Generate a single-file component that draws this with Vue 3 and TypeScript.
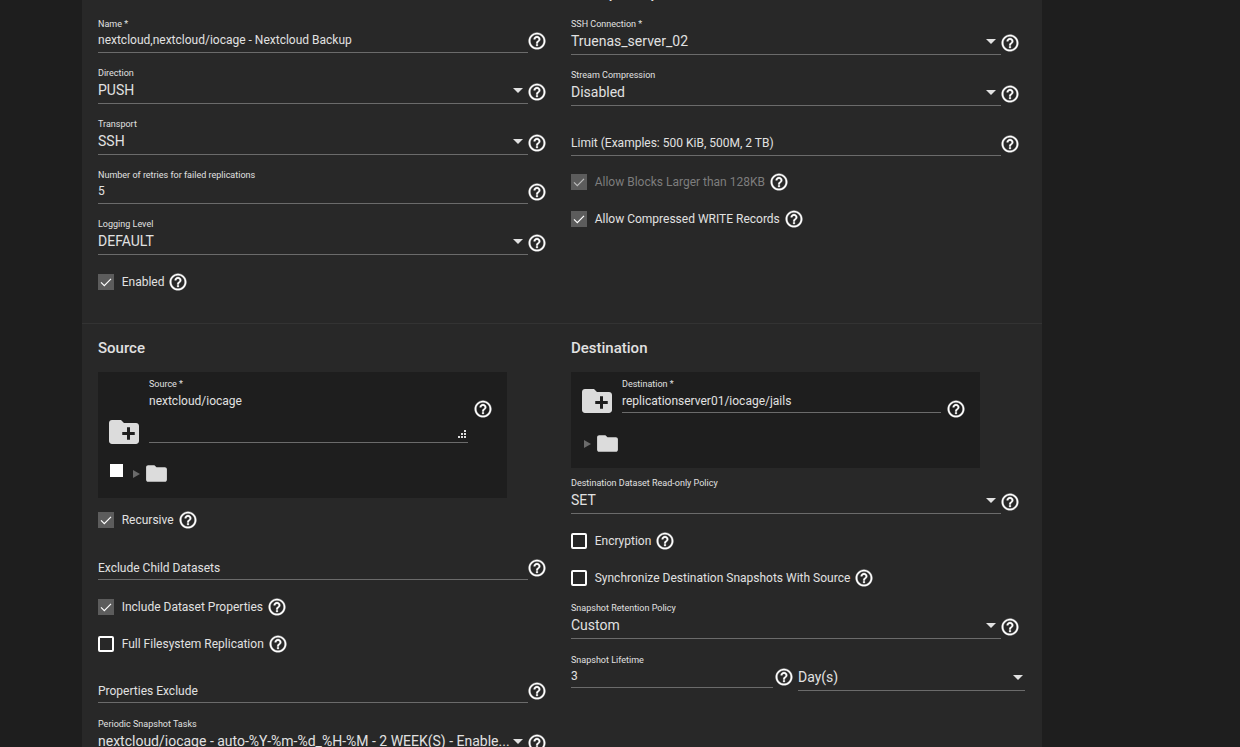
<script setup lang="ts">
interface Field {
  label: string
  value: string
  kind: 'input' | 'select' | 'empty'
}

const helpPath =
  'M11 18h2v-2h-2v2zm1-16C6.48 2 2 6.48 2 12s4.48 10 10 10 10-4.48 10-10S17.52 2 12 2zm0 18c-4.41 0-8-3.59-8-8s3.59-8 8-8 8 3.59 8 8-3.59 8-8 8zm0-14c-2.21 0-4 1.79-4 4h2c0-1.1.9-2 2-2s2 .9 2 2c0 2-3 1.75-3 5h2c0-2.25 3-2.5 3-5 0-2.21-1.79-4-4-4z'
const newFolderPath =
  'M20 6h-8l-2-2H4c-1.11 0-1.99.89-1.99 2L2 18c0 1.11.89 2 2 2h16c1.11 0 2-.89 2-2V8c0-1.11-.89-2-2-2zm-1 8h-3v3h-2v-3h-3v-2h3V9h2v3h3v2z'
const folderPath = 'M10 4H4c-1.1 0-1.99.9-1.99 2L2 18c0 1.1.9 2 2 2h16c1.1 0 2-.9 2-2V8c0-1.1-.9-2-2-2h-8l-2-2z'

const generalFields: Field[] = [
  { label: 'Name *', value: 'nextcloud,nextcloud/iocage - Nextcloud Backup', kind: 'input' },
  { label: 'Direction', value: 'PUSH', kind: 'select' },
  { label: 'Transport', value: 'SSH', kind: 'select' },
  { label: 'Number of retries for failed replications', value: '5', kind: 'input' },
  { label: 'Logging Level', value: 'DEFAULT', kind: 'select' },
]
const transportFields: Field[] = [
  { label: 'SSH Connection *', value: 'Truenas_server_02', kind: 'select' },
  { label: 'Stream Compression', value: 'Disabled', kind: 'select' },
  { label: '', value: 'Limit (Examples: 500 KiB, 500M, 2 TB)', kind: 'empty' },
]
</script>

<template>
  <div class="page">
    <main class="card">
      <section class="section top">
        <div class="col">
          <h3 class="heading">General</h3>
          <div class="stack">
            <div v-for="f in generalFields" :key="f.label" class="field" :class="f.kind">
              <div class="control">
                <label class="label">{{ f.label }}</label>
                <div class="value-row">
                  <span class="value">{{ f.value }}</span>
                  <i v-if="f.kind === 'select'" class="caret"></i>
                </div>
              </div>
              <svg class="help" viewBox="0 0 24 24"><path :d="helpPath" /></svg>
            </div>
          </div>
          <div class="check enabled-row">
            <span class="box on"><svg viewBox="0 0 16 16"><path d="M3 8.4l3.3 3.2L13 4.8" /></svg></span>
            <span class="check-text">Enabled</span>
            <svg class="help" viewBox="0 0 24 24"><path :d="helpPath" /></svg>
          </div>
        </div>
        <div class="col">
          <h3 class="heading">Transport Options</h3>
          <div class="stack right-stack">
            <div v-for="f in transportFields" :key="f.value" class="field" :class="f.kind">
              <div class="control">
                <label v-if="f.label" class="label">{{ f.label }}</label>
                <div class="value-row">
                  <span class="value">{{ f.value }}</span>
                  <i v-if="f.kind === 'select'" class="caret"></i>
                </div>
              </div>
              <svg class="help" viewBox="0 0 24 24"><path :d="helpPath" /></svg>
            </div>
          </div>
          <div class="check large-block disabled">
            <span class="box on"><svg viewBox="0 0 16 16"><path d="M3 8.4l3.3 3.2L13 4.8" /></svg></span>
            <span class="check-text">Allow Blocks Larger than 128KB</span>
            <svg class="help" viewBox="0 0 24 24"><path :d="helpPath" /></svg>
          </div>
          <div class="check compressed">
            <span class="box on"><svg viewBox="0 0 16 16"><path d="M3 8.4l3.3 3.2L13 4.8" /></svg></span>
            <span class="check-text">Allow Compressed WRITE Records</span>
            <svg class="help" viewBox="0 0 24 24"><path :d="helpPath" /></svg>
          </div>
        </div>
      </section>

      <section class="section bottom">
        <div class="col">
          <h3 class="heading">Source</h3>
          <div class="explorer source-box">
            <div class="explorer-head">
              <svg class="new-folder" viewBox="0 0 24 24"><path :d="newFolderPath" /><path class="plus" d="M19 14h-3v3h-2v-3h-3v-2h3V9h2v3h3z" /></svg>
              <div class="explorer-control tall">
                <label class="label">Source *</label>
                <div class="value">nextcloud/iocage</div>
                <svg class="grip" viewBox="0 0 9 8"><path d="M7 0h2v2H7zM7 3h2v2H7zM7 6h2v2H7zM4 3h2v2H4zM4 6h2v2H4zM1 6h2v2H1z" /></svg>
              </div>
              <svg class="help" viewBox="0 0 24 24"><path :d="helpPath" /></svg>
            </div>
            <div class="tree-row with-check">
              <i class="tree-check"></i>
              <i class="tree-arrow"></i>
              <svg class="tree-folder" viewBox="0 0 24 24"><path :d="folderPath" /></svg>
            </div>
          </div>
          <div class="check recursive">
            <span class="box on"><svg viewBox="0 0 16 16"><path d="M3 8.4l3.3 3.2L13 4.8" /></svg></span>
            <span class="check-text">Recursive</span>
            <svg class="help" viewBox="0 0 24 24"><path :d="helpPath" /></svg>
          </div>
          <div class="field empty exclude">
            <div class="control"><div class="value-row"><span class="value">Exclude Child Datasets</span></div></div>
            <svg class="help" viewBox="0 0 24 24"><path :d="helpPath" /></svg>
          </div>
          <div class="check include">
            <span class="box on"><svg viewBox="0 0 16 16"><path d="M3 8.4l3.3 3.2L13 4.8" /></svg></span>
            <span class="check-text">Include Dataset Properties</span>
            <svg class="help" viewBox="0 0 24 24"><path :d="helpPath" /></svg>
          </div>
          <div class="check full">
            <span class="box"></span>
            <span class="check-text">Full Filesystem Replication</span>
            <svg class="help" viewBox="0 0 24 24"><path :d="helpPath" /></svg>
          </div>
          <div class="field empty props">
            <div class="control"><div class="value-row"><span class="value">Properties Exclude</span></div></div>
            <svg class="help" viewBox="0 0 24 24"><path :d="helpPath" /></svg>
          </div>
          <div class="field select periodic">
            <div class="control">
              <label class="label">Periodic Snapshot Tasks</label>
              <div class="value-row">
                <span class="value">nextcloud/iocage - auto-%Y-%m-%d_%H-%M - 2 WEEK(S) - Enable...</span>
                <i class="caret"></i>
              </div>
            </div>
            <svg class="help" viewBox="0 0 24 24"><path :d="helpPath" /></svg>
          </div>
        </div>

        <div class="col">
          <h3 class="heading">Destination</h3>
          <div class="explorer dest-box">
            <div class="explorer-head">
              <svg class="new-folder" viewBox="0 0 24 24"><path :d="newFolderPath" /><path class="plus" d="M19 14h-3v3h-2v-3h-3v-2h3V9h2v3h3z" /></svg>
              <div class="explorer-control">
                <label class="label">Destination *</label>
                <div class="value">replicationserver01/iocage/jails</div>
              </div>
              <svg class="help" viewBox="0 0 24 24"><path :d="helpPath" /></svg>
            </div>
            <div class="tree-row">
              <i class="tree-arrow"></i>
              <svg class="tree-folder" viewBox="0 0 24 24"><path :d="folderPath" /></svg>
            </div>
          </div>
          <div class="field select policy">
            <div class="control">
              <label class="label">Destination Dataset Read-only Policy</label>
              <div class="value-row"><span class="value">SET</span><i class="caret"></i></div>
            </div>
            <svg class="help" viewBox="0 0 24 24"><path :d="helpPath" /></svg>
          </div>
          <div class="check encryption">
            <span class="box"></span>
            <span class="check-text">Encryption</span>
            <svg class="help" viewBox="0 0 24 24"><path :d="helpPath" /></svg>
          </div>
          <div class="check sync">
            <span class="box"></span>
            <span class="check-text">Synchronize Destination Snapshots With Source</span>
            <svg class="help" viewBox="0 0 24 24"><path :d="helpPath" /></svg>
          </div>
          <div class="field select retention">
            <div class="control">
              <label class="label">Snapshot Retention Policy</label>
              <div class="value-row"><span class="value">Custom</span><i class="caret"></i></div>
            </div>
            <svg class="help" viewBox="0 0 24 24"><path :d="helpPath" /></svg>
          </div>
          <div class="lifetime">
            <div class="field input life-value">
              <div class="control">
                <label class="label">Snapshot Lifetime</label>
                <div class="value-row"><span class="value">3</span></div>
              </div>
              <svg class="help" viewBox="0 0 24 24"><path :d="helpPath" /></svg>
            </div>
            <div class="life-unit">
              <div class="value-row"><span class="value">Day(s)</span><i class="caret"></i></div>
            </div>
          </div>
        </div>
      </section>
    </main>
  </div>
</template>

<style>
html,
body {
  margin: 0;
  background: #1e1e1e;
}
</style>

<style scoped>
.page {
  height: 747px;
  overflow: hidden;
  background: #1e1e1e;
  font-family: Roboto, "Liberation Sans", sans-serif;
  color: #e1e1e1;
}
.card {
  width: 960px;
  margin: -32px 0 0 82px;
  background: #282828;
}
.section {
  display: grid;
  grid-template-columns: 473px 1fr;
  padding-left: 16px;
}
.top {
  height: 356px;
  box-sizing: border-box;
  border-bottom: 1px solid #333;
}
.bottom {
  height: 430px;
}
.heading {
  margin: 0;
  height: 50px;
  font-size: 15px;
  line-height: 50px;
  font-weight: 500;
  color: #e1e1e1;
}
.bottom .heading {
  height: 49px;
  line-height: 49px;
}
.stack {
  display: flex;
  flex-direction: column;
  gap: 14px;
}
.field {
  display: flex;
  align-items: flex-end;
}
.control {
  position: relative;
  flex: 0 0 430px;
  box-sizing: border-box;
  border-bottom: 1px solid #6b6b6b;
}
.label {
  display: block;
  height: 12px;
  font-size: 9px;
  line-height: 12px;
  color: #e1e1e1;
}
.value-row {
  display: flex;
  align-items: center;
  justify-content: space-between;
  height: 18px;
  font-size: 14px;
  line-height: 18px;
}
.value {
  white-space: nowrap;
}
.input .control {
  height: 35px;
}
.input .value-row {
  margin-top: 1px;
}
.input .value {
  font-size: 12px;
}
.select .control {
  height: 37px;
}
.select .value-row {
  margin-top: 2px;
}
.empty .control {
  height: 22px;
}
.empty .value-row {
  margin-top: 1px;
}
.right-stack .empty .value-row {
  margin-top: 0;
}
.empty .value {
  font-size: 12px;
}
.caret {
  flex: none;
  width: 0;
  height: 0;
  margin-right: 5px;
  border-left: 5px solid transparent;
  border-right: 5px solid transparent;
  border-top: 5px solid #e1e1e1;
}
.help {
  flex: none;
  width: 20px;
  height: 20px;
  fill: #fff;
  stroke: #fff;
  stroke-width: 0.4;
}
.field > .help {
  margin: 0 0 2px -1px;
}
.check {
  display: flex;
  align-items: center;
  height: 20px;
  font-size: 12px;
}
.box {
  flex: none;
  box-sizing: border-box;
  width: 16px;
  height: 16px;
  border: 2px solid #fff;
  border-radius: 2px;
  margin-right: 7.7px;
}
.box.on {
  border: 0;
  border-radius: 0;
  background: #5c5c5c;
}
.box svg {
  display: block;
  width: 16px;
  height: 16px;
  fill: none;
  stroke: #fff;
  stroke-width: 1.2;
}
.check-text {
  color: #e1e1e1;
}
.check .help {
  margin-left: 4px;
}
.disabled .check-text {
  color: #7d7d7d;
}
.disabled .box svg {
  stroke: #bbb;
}
.enabled-row {
  margin-top: 17px;
}
.right-stack .empty {
  margin-top: 14px;
}
.large-block {
  margin-top: 16px;
}
.compressed {
  margin-top: 17px;
}
.explorer {
  position: relative;
  width: 409px;
  background: #1e1e1e;
}
.source-box {
  height: 126px;
  margin-top: -1px;
}
.dest-box {
  height: 96px;
  margin-top: -1px;
}
.explorer-head {
  display: flex;
  align-items: flex-end;
  padding-left: 8px;
  padding-top: 6px;
}
.new-folder {
  flex: none;
  width: 36px;
  height: 36px;
  margin: 0 7px -6px 0;
  fill: #dcdcdc;
}
.source-box .new-folder {
  margin-bottom: -7px;
}
.plus {
  fill: #1e1e1e;
}
.explorer-control {
  position: relative;
  flex: none;
  width: 319px;
  height: 35px;
  box-sizing: border-box;
  border-bottom: 1px solid #6b6b6b;
}
.explorer-control.tall {
  height: 65px;
}
.explorer-control .value {
  font-size: 12px;
  line-height: 18px;
  margin-top: 2px;
}
.grip {
  position: absolute;
  right: 2px;
  bottom: 4px;
  width: 9px;
  height: 8px;
  fill: #ddd;
}
.explorer-head .help {
  margin-left: 5px;
  margin-bottom: -6px;
}
.source-box .explorer-head .help {
  margin-bottom: 24px;
}
.tree-row {
  display: flex;
  align-items: center;
  padding-left: 13px;
  margin-top: 18px;
}
.tree-row.with-check {
  padding-left: 12px;
}
.tree-check {
  width: 13px;
  height: 13px;
  background: #fff;
  margin-right: 10px;
  margin-top: -7px;
}
.tree-arrow {
  width: 0;
  height: 0;
  border-top: 4px solid transparent;
  border-bottom: 4px solid transparent;
  border-left: 7px solid #6b6b6b;
  margin-right: 4px;
}
.tree-folder {
  width: 25px;
  height: 25px;
  fill: #dcdcdc;
}
.recursive {
  margin-top: 12px;
}
.exclude {
  margin-top: 28px;
}
.include {
  margin-top: 17px;
}
.full {
  margin-top: 17px;
}
.props {
  margin-top: 27px;
}
.periodic {
  margin-top: 15px;
}
.policy {
  margin-top: 9px;
}
.encryption {
  margin-top: 17px;
}
.sync {
  margin-top: 17px;
}
.retention {
  margin-top: 14px;
}
.lifetime {
  display: flex;
  margin-top: 15px;
}
.field.life-value {
  align-items: flex-start;
}
.life-value .control {
  flex-basis: 202px;
  height: 34px;
}
.field.life-value > .help {
  margin: 13px 0 0 1px;
}
.life-unit {
  box-sizing: border-box;
  width: 227px;
  height: 37px;
  margin-left: 4px;
  padding-top: 14px;
  border-bottom: 1px solid #6b6b6b;
}
.life-unit .caret {
  margin-right: 2px;
}
</style>
